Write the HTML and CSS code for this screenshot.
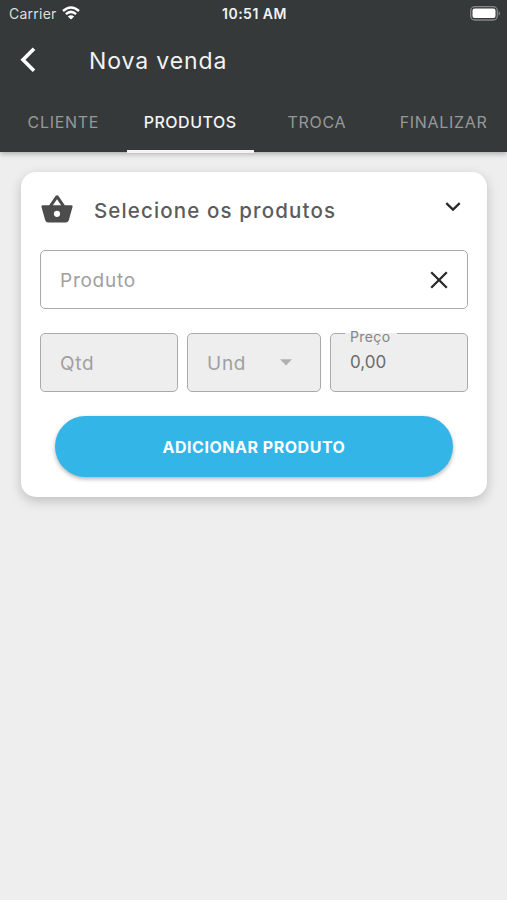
FILE: index.html
```html
<!DOCTYPE html>
<html lang="pt-BR">
<head>
<meta charset="utf-8">
<meta name="viewport" content="width=device-width, initial-scale=1">
<title>Nova venda</title>
<link rel="stylesheet" href="styles.css">
</head>
<body>
<header class="header">
  <div class="status">
    <div class="carrier"><span>Carrier</span>
      <svg width="18" height="14" viewBox="0 0 18 14" fill="none" stroke="#fff" stroke-width="2.5"><path d="M1 5Q9-2 17 5M3.9 8.1Q9 3.7 14.1 8.1"/><path d="M9 13.5 5.800 10.400Q9 8 12.200 10.400Z" fill="#fff" stroke="none"/></svg>
    </div>
    <time class="clock">10:51 AM</time>
    <svg class="battery" width="31" height="15" viewBox="0 0 31 15"><rect x=".7" y=".7" width="26.6" height="13.3" rx="4" fill="none" stroke="#858888" stroke-width="1.3"/><rect x="2.5" y="2.5" width="23" height="9.6" rx="2" fill="#fff"/><path d="M28.6 5.2q3 2.2 0 4.4z" fill="#858888"/></svg>
  </div>
  <div class="titlebar">
    <svg class="back" width="16" height="26" viewBox="0 0 16 26" fill="none" stroke="#fff" stroke-width="3.6"><path d="M14 1.8 3 12.8 14 23.8"/></svg>
    <h1 class="title">Nova venda</h1>
  </div>
  <nav class="tabs">
    <a class="tab">CLIENTE</a>
    <a class="tab active">PRODUTOS</a>
    <a class="tab">TROCA</a>
    <a class="tab">FINALIZAR</a>
  </nav>
</header>
<main class="card">
  <div class="card-head">
    <svg class="basket" width="32" height="28" viewBox="0 0 32 28"><path fill="#4c4c4c" fill-rule="evenodd" d="M14.5 1Q16 -.6 17.5 1L23.8 10.2H30.2Q31.9 10.2 31.5 12L27.8 25.2Q27.1 27.5 24.8 27.5H7.2Q4.9 27.5 4.2 25.2L.5 12Q.1 10.2 1.8 10.2H8.2ZM16 4.2 11.9 10.2H20.1ZM16 15.7a3.1 3.1 0 1 0 0 6.2a3.1 3.1 0 1 0 0-6.2Z"/></svg>
    <h2 class="heading">Selecione os produtos</h2>
    <svg class="chevron" width="16" height="10" viewBox="0 0 16 10" fill="none" stroke="#292929" stroke-width="2.3"><path d="M1.3 1.2 8 7.7 14.7 1.2"/></svg>
  </div>
  <div class="field product">
    <span class="placeholder">Produto</span>
    <svg width="18" height="18" viewBox="0 0 18 18" fill="none" stroke="#292929" stroke-width="2.3"><path d="M1.2 1.2 16.8 16.8M16.8 1.2 1.2 16.8"/></svg>
  </div>
  <div class="row">
    <div class="field disabled"><span class="placeholder">Qtd</span></div>
    <div class="field disabled unit"><span class="placeholder">Und</span>
      <svg width="12" height="7" viewBox="0 0 12 7"><path fill="#b0b0b0" d="M0 .3H12L6 6.5Z"/></svg>
    </div>
    <div class="field disabled price"><span class="label">Preço</span><span class="value">0,00</span></div>
  </div>
  <button class="add"><span>ADICIONAR PRODUTO</span></button>
</main>
</body>
</html>
```
FILE: styles.css
```css
* { box-sizing: border-box; }
body { margin: 0; min-height: 900px; background: #eee; font-family: Inter, "Liberation Sans", sans-serif; overflow: hidden; }
svg { display: block; flex: none; }
.header { height: 152px; background: #353939; color: #f2f2f2; box-shadow: 0 2px 5px rgba(0,0,0,.28); }
.status { height: 28px; padding: 0 6px 2px 9px; display: grid; grid-template-columns: 1fr auto 1fr; align-items: center; font-size: 14px; }
.carrier { display: flex; align-items: center; gap: 5px; letter-spacing: .25px; color: #dedede; }
.clock { font-weight: 600; letter-spacing: .5px; padding-right: 1px; }
.battery { justify-self: end; }
.titlebar { height: 64px; display: flex; align-items: center; padding-left: 20px; }
.title { margin: 2px 0 0 53px; font-size: 23px; font-weight: 400; letter-spacing: .9px; }
.tabs { height: 61px; display: grid; grid-template-columns: repeat(4, 1fr); }
.tab { display: flex; align-items: center; justify-content: center; border-bottom: 3px solid transparent; border-top: 2px solid transparent; font-size: 16px; color: #969999; letter-spacing: .7px; }
.tab.active { color: #f4f4f4; border-bottom-color: #f4f4f4; font-weight: 500; letter-spacing: .5px; }
.card { margin: 20px 20px 0 21px; height: 325px; padding: 0 19px; background: #fff; border-radius: 15px; box-shadow: 0 4px 12px rgba(0,0,0,.2); }
.card-head { height: 78px; display: flex; align-items: center; padding: 0 7px 5px 1px; }
.heading { margin: 4px auto 0 21px; font-size: 20.5px; font-weight: 500; letter-spacing: 1.13px; color: #5c5c5c; }
.chevron { margin-bottom: 3px; }
.field { height: 59px; border: 1.5px solid #aaa; border-radius: 5px; display: flex; align-items: center; padding: 0 19px; }
.product { justify-content: space-between; }
.placeholder { color: #a0a0a0; font-size: 19px; letter-spacing: .75px; padding-top: 2px; }
.row { display: grid; grid-template-columns: 138px 134px 138px; gap: 9px; margin-top: 24px; }
.disabled { background: #eee; }
.unit { justify-content: space-between; padding-right: 28px; }
.price { position: relative; }
.label { position: absolute; left: 14px; top: -6px; padding: 0 6px 0 5px; background: linear-gradient(#fff 5px, #eee 5px); font-size: 14px; line-height: 17px; color: #858585; letter-spacing: .4px; }
.value { font-size: 17px; color: #6b6b6b; padding-bottom: 2px; }
.add { display: flex; align-items: center; justify-content: center; width: 398px; height: 61px; margin: 24px 0 0 15px; padding: 0; border: 0; border-radius: 31px; background: #33b5e7; color: #fff; font: 700 16px Inter, "Liberation Sans", sans-serif; letter-spacing: .52px; box-shadow: 0 2px 4px rgba(0,0,0,.3); }
```
